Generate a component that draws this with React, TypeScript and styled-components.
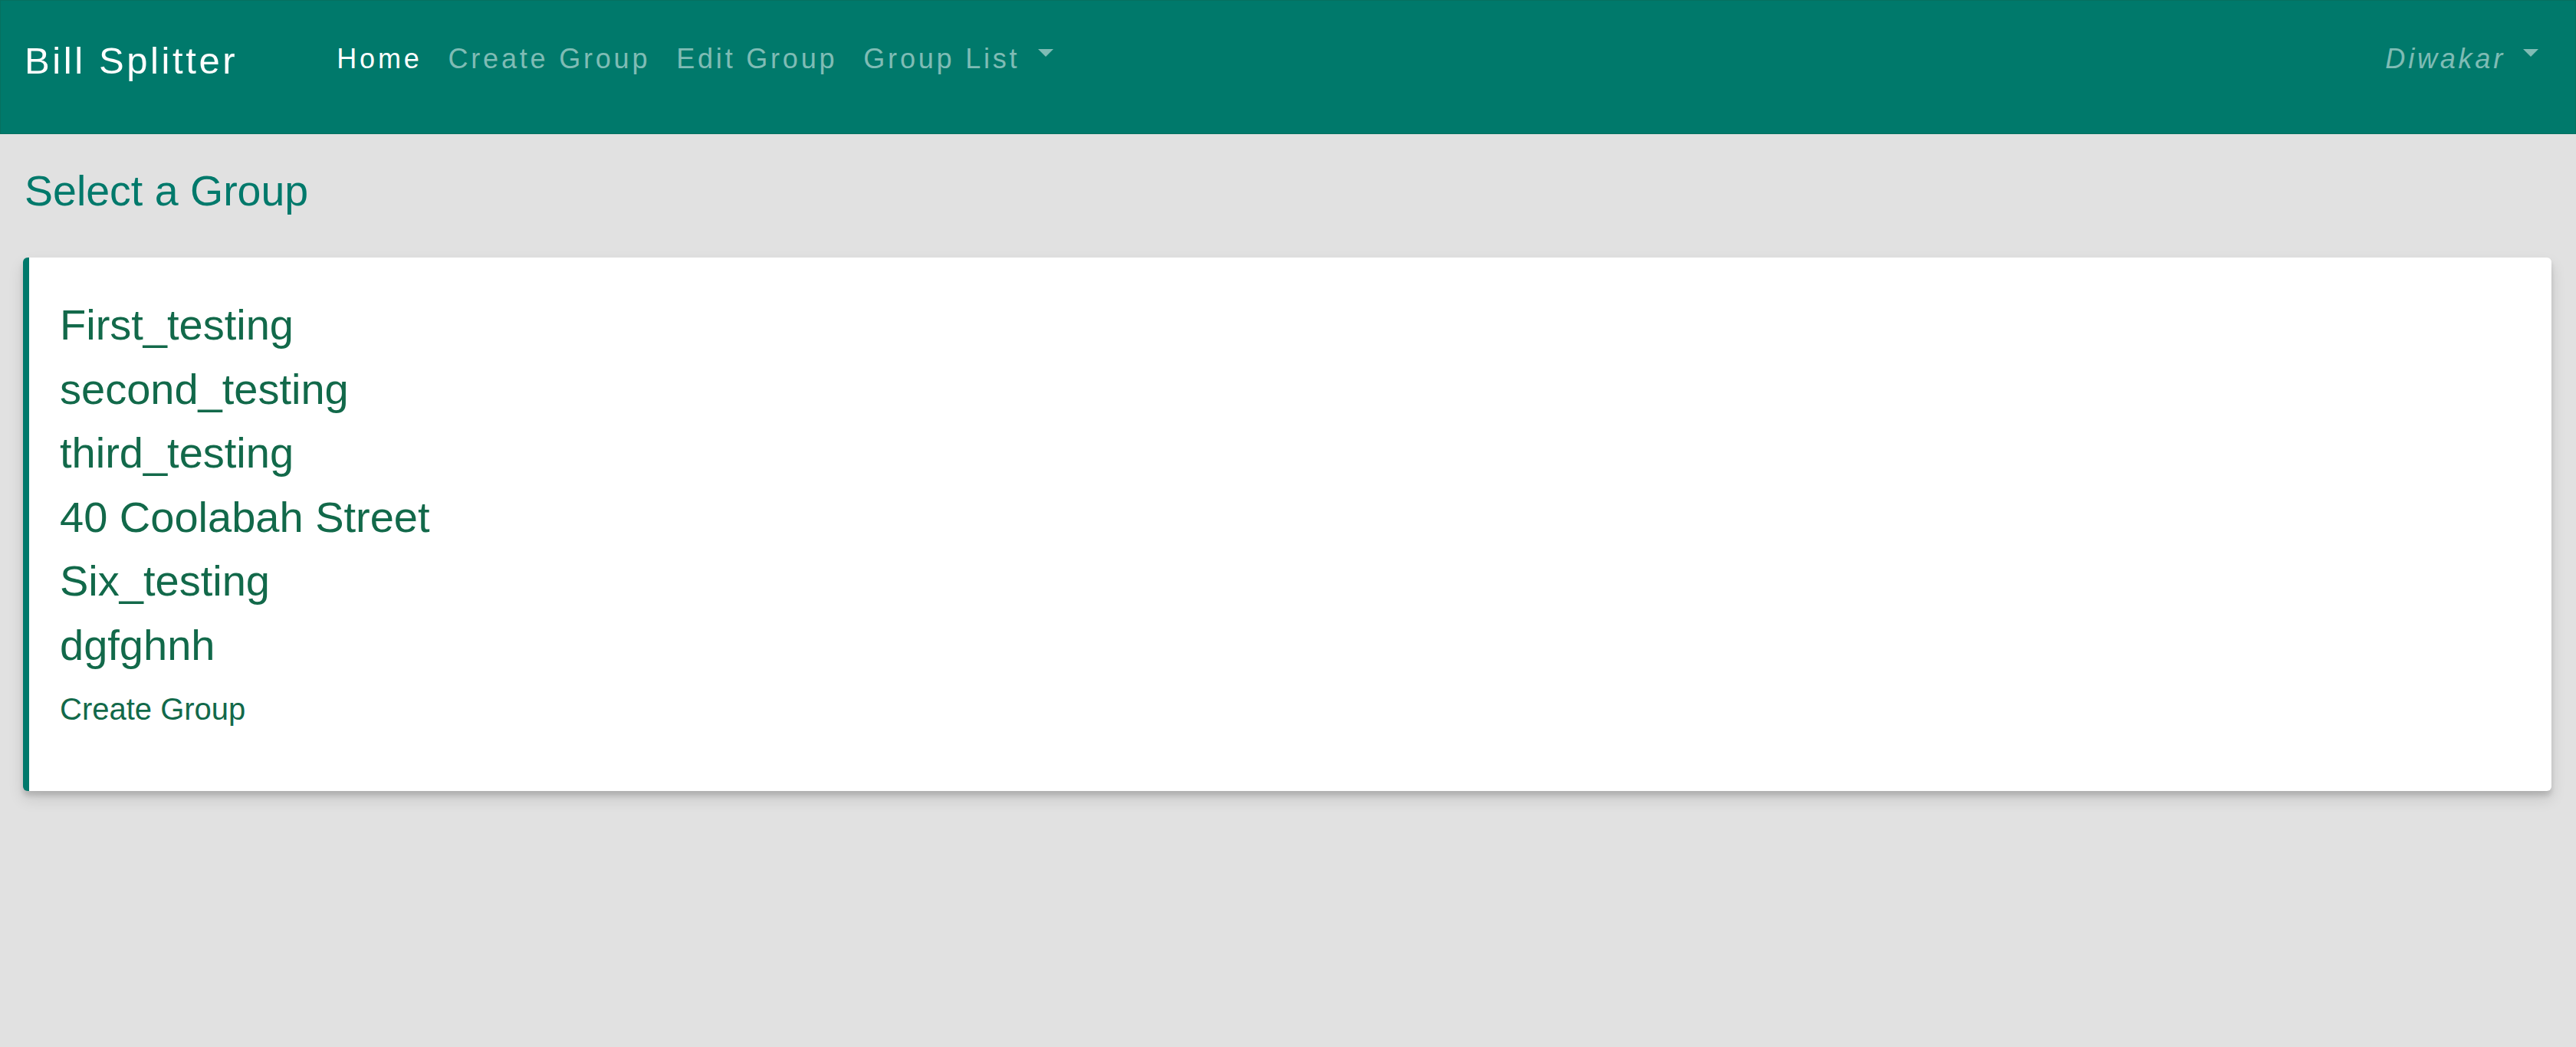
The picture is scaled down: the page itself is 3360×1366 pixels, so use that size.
import React from "react";
import styled, { createGlobalStyle } from "styled-components";

const GlobalStyle = createGlobalStyle`
  html, body {
    margin: 0;
    padding: 0;
    background: #e1e1e1;
    font-family: "Liberation Sans", Arial, Helvetica, sans-serif;
  }
  * { box-sizing: border-box; }
`;

const Page = styled.div`
  min-height: 1366px;
  background: #e1e1e1;
`;

const NavBar = styled.nav`
  height: 175px;
  background: #00796b;
  border: 1px solid #06705f;
  display: flex;
  align-items: flex-start;
  padding: 42px 31px 0 31px;
`;

const Brand = styled.a`
  color: #ffffff;
  font-size: 49px;
  line-height: 73px;
  letter-spacing: 3.6px;
  text-decoration: none;
  margin-right: 112px;
  white-space: nowrap;
`;

const NavList = styled.ul`
  list-style: none;
  margin: 0;
  padding: 7px 0 0;
  display: flex;
  align-items: flex-start;
`;

const NavItem = styled.li<{ $active?: boolean; $italic?: boolean }>`
  display: flex;
  align-items: flex-start;
  padding: 0 17px;
  font-size: 36px;
  line-height: 54px;
  letter-spacing: 3.8px;
  white-space: nowrap;
  color: ${(p) => (p.$active ? "#ffffff" : "rgba(255,255,255,0.5)")};
  font-style: ${(p) => (p.$italic ? "italic" : "normal")};
  cursor: pointer;
`;

const Caret = styled.span<{ $gap: number }>`
  display: inline-block;
  margin-left: ${(p) => p.$gap}px;
  margin-top: 14px;
  width: 0;
  height: 0;
  border-top: 10px solid currentColor;
  border-left: 10px solid transparent;
  border-right: 10px solid transparent;
`;

const Spacer = styled.div`
  flex: 1;
`;

const UserMenu = styled(NavList)`
  padding-right: 0;
`;

const Main = styled.main`
  padding: 0 32px 0 30px;
`;

const Title = styled.h3`
  margin: 40px 0 53px 2px;
  font-size: 55.5px;
  line-height: 68px;
  font-weight: normal;
  color: #00796b;
`;

const Card = styled.section`
  background: #ffffff;
  border-left: 8px solid #00796b;
  border-radius: 6px;
  box-shadow: 0 10px 20px rgba(0, 0, 0, 0.12), 0 6px 6px rgba(0, 0, 0, 0.13);
  padding: 46px 38px 75px 40px;
  min-height: 696px;
`;

const GroupLink = styled.a`
  display: block;
  font-size: 56px;
  line-height: 83.5px;
  color: #12694a;
  text-decoration: none;
  cursor: pointer;
`;

const CreateLink = styled.a`
  display: block;
  margin-top: 12px;
  font-size: 40px;
  line-height: 60px;
  color: #12694a;
  text-decoration: none;
  cursor: pointer;
`;

const groups = [
  "First_testing",
  "second_testing",
  "third_testing",
  "40 Coolabah Street",
  "Six_testing",
  "dgfghnh",
];

export default function App() {
  return (
    <Page>
      <GlobalStyle />
      <NavBar>
        <Brand>Bill Splitter</Brand>
        <NavList>
          <NavItem $active>Home</NavItem>
          <NavItem>Create Group</NavItem>
          <NavItem>Edit Group</NavItem>
          <NavItem>
            Group List
            <Caret $gap={24} />
          </NavItem>
        </NavList>
        <Spacer />
        <UserMenu>
          <NavItem $italic>
            Diwakar
            <Caret $gap={23} />
          </NavItem>
        </UserMenu>
      </NavBar>
      <Main>
        <Title>Select a Group</Title>
        <Card>
          {groups.map((g) => (
            <GroupLink key={g}>{g}</GroupLink>
          ))}
          <CreateLink>Create Group</CreateLink>
        </Card>
      </Main>
    </Page>
  );
}
